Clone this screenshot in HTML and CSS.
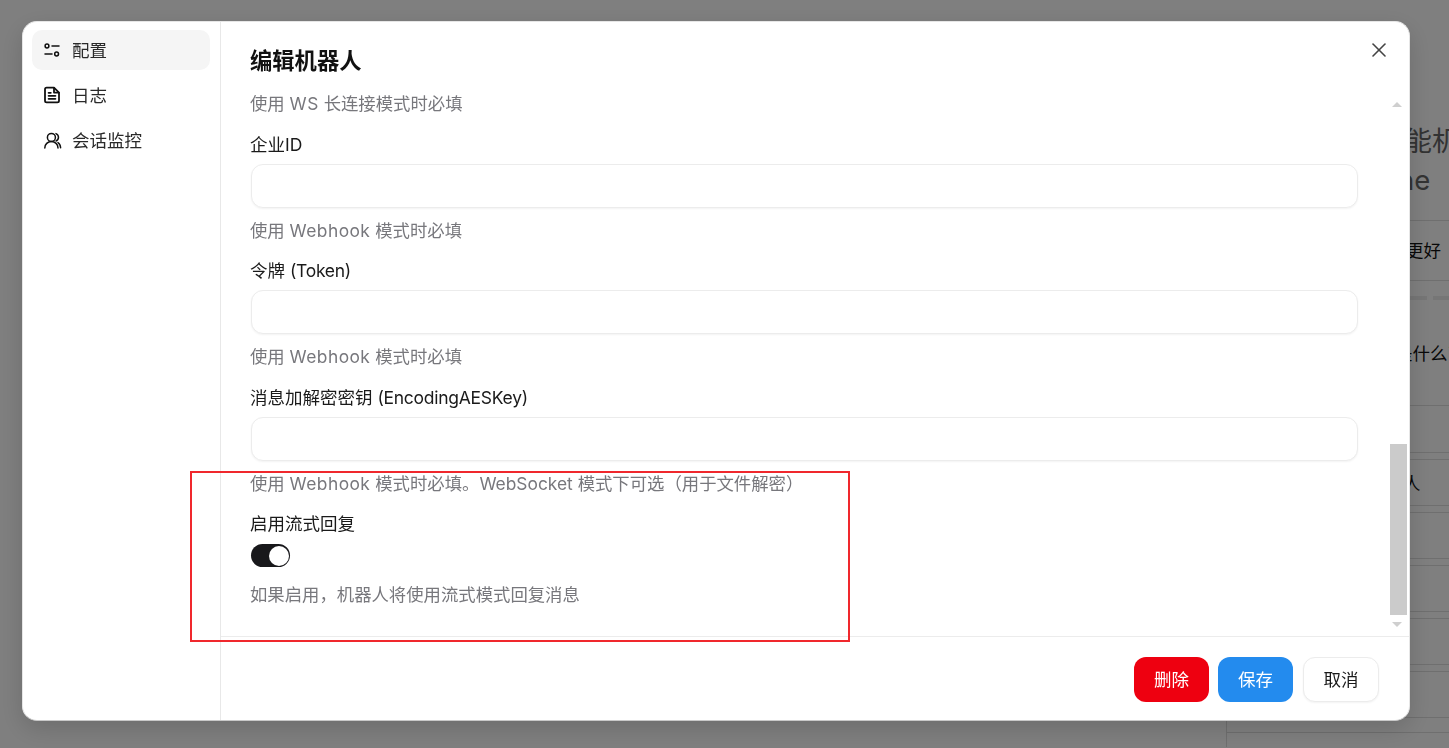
FILE: index.html
```html
<!DOCTYPE html>
<html lang="zh-CN">
<head>
<meta charset="utf-8">
<title>编辑机器人</title>
<link rel="stylesheet" href="styles.css">
</head>
<body>
<main class="page">
  <section class="page-col">
    <header class="page-head">
      <h1 class="page-title">智能机器人</h1>
      <p class="page-sub">ne</p>
    </header>
    <div class="row row-tall"><span class="row-text">更好</span></div>
    <div class="row row-chat">
      <div class="skeleton"><i class="skel skel-a"></i><i class="skel skel-b"></i></div>
      <span class="row-text row-text-b">是什么了</span>
    </div>
    <div class="row row-gap"></div>
    <div class="row row-thin"></div>
    <div class="row row-cell"><span class="row-text">人</span></div>
    <div class="row row-thin"></div>
    <div class="row row-cell"></div>
    <div class="row row-thin"></div>
    <div class="row row-cell"></div>
    <div class="row row-thin"></div>
    <div class="row row-cell"></div>
    <div class="row row-thin"></div>
    <div class="row row-cell"></div>
    <div class="row row-foot"></div>
    <div class="row row-foot"></div>
  </section>
</main>

<div class="overlay">
  <div class="dialog">
    <nav class="side">
      <a class="side-item is-active">
        <svg class="side-icon icon-thin" viewBox="0 0 20 20"><circle cx="5" cy="6" r="1.9"/><path d="M10 6h7"/><path d="M3 14h7"/><circle cx="14.6" cy="14" r="1.9"/></svg>
        <span>配置</span>
      </a>
      <a class="side-item">
        <svg class="side-icon" viewBox="0 0 20 20"><path d="M12 2.6H4.6A1.6 1.6 0 0 0 3 4.2v11.6a1.6 1.6 0 0 0 1.6 1.6h10.8a1.6 1.6 0 0 0 1.6-1.6V7.6Z"/><path d="M12 2.8v4.8h4.8"/><path d="M6.6 7.8h2.2"/><path d="M6.6 10.8h6.8"/><path d="M6.6 13.8h6.8"/></svg>
        <span>日志</span>
      </a>
      <a class="side-item">
        <svg class="side-icon icon-thin" viewBox="0 0 20 20"><circle cx="9.4" cy="7.4" r="4"/><path d="M2.8 18c0-3.8 2.9-6.4 6.6-6.4s6.6 2.6 6.6 6.4"/><path d="M14 3.6a4 4 0 0 1 0 7.4"/><path d="M16 12.6c1.5.9 2.4 2.8 2.6 5.2"/></svg>
        <span>会话监控</span>
      </a>
    </nav>

    <div class="main">
      <button class="close" type="button" aria-label="关闭">
        <svg viewBox="0 0 24 24"><path d="M18 6 6 18"/><path d="m6 6 12 12"/></svg>
      </button>
      <h2 class="title">编辑机器人</h2>
      <div class="body">
        <p class="hint">使用 <span class="en">WS</span> 长连接模式时必填</p>
        <div class="field">
          <label class="label">企业ID</label>
          <input class="input" type="text">
          <p class="hint">使用 <span class="en">Webhook</span> 模式时必填</p>
        </div>
        <div class="field">
          <label class="label">令牌 <span class="en-tight">(Token)</span></label>
          <input class="input" type="text">
          <p class="hint">使用 <span class="en">Webhook</span> 模式时必填</p>
        </div>
        <div class="field">
          <label class="label">消息加解密密钥 <span class="en-tight">(EncodingAESKey)</span></label>
          <input class="input" type="text">
          <p class="hint">使用 <span class="en">Webhook</span> 模式时必填。WebSocket 模式下可选（用于文件解密）</p>
        </div>
        <div class="field">
          <label class="label">启用流式回复</label>
          <div class="toggle"><span class="knob"></span></div>
          <p class="hint">如果启用，机器人将使用流式模式回复消息</p>
        </div>
        <div class="scroll-up"></div>
        <div class="scroll-thumb"></div>
        <div class="scroll-down"></div>
      </div>
      <footer class="footer">
        <button class="btn btn-danger" type="button">删除</button>
        <button class="btn btn-primary" type="button">保存</button>
        <button class="btn btn-plain" type="button">取消</button>
      </footer>
    </div>
  </div>
</div>

<div class="annotation"></div>
</body>
</html>
```

FILE: styles.css
```css
* { box-sizing: border-box; }

html, body {
  margin: 0;
  height: 100%;
  overflow: hidden;
}

body {
  background: #fff;
  color: #1a1a1a;
  font-family: Inter, "Noto Sans CJK SC", sans-serif;
  font-size: 17.5px;
  line-height: 25px;
}

h1, h2, p { margin: 0; font-weight: normal; }

/* page behind the dialog */
.page {
  display: flex;
  justify-content: flex-end;
  height: 748px;
}

.page-col {
  width: 223px;
  height: 748px;
  overflow: hidden;
  color: #111;
  white-space: nowrap;
}

.page-head {
  height: 220px;
  padding: 122px 0 0 151px;
}

.page-title,
.page-sub {
  font-size: 27.5px;
  line-height: 39px;
  color: #666;
}

.page-sub { padding-left: 21px; }

.row { border-top: 1px solid #dedede; }
.row-tall { height: 60px; padding: 17px 0 0 180px; }
.row-chat { height: 125px; padding: 15px 0 0 169px; }
.row-gap { height: 47px; }
.row-thin { height: 7px; }
.row-cell { height: 46px; padding: 11px 0 0 177px; }
.row-foot { height: 15px; border-left: 1px solid #dedede; }

.row-text { display: block; line-height: 25px; }
.row-text-b { margin-top: 41px; }

.skeleton { display: flex; gap: 6px; height: 4px; margin-left: 14px; }
.skel { display: block; background: #ececec; }
.skel-a { width: 22px; }
.skel-b { width: 20px; }

/* dialog */
.overlay {
  position: fixed;
  inset: 0;
  display: flex;
  padding: 21px 39px 27px 22px;
  background: rgba(0, 0, 0, 0.5);
}

.dialog {
  flex: 1;
  display: flex;
  overflow: hidden;
  background: #fff;
  border: 1px solid #e6e6e6;
  border-bottom-color: #c9c9c9;
  border-radius: 15px;
  box-shadow: 0 8px 24px rgba(0, 0, 0, 0.15);
}

.side {
  width: 198px;
  flex: none;
  display: flex;
  flex-direction: column;
  gap: 5px;
  padding: 8px 10px 0 9px;
  border-right: 1px solid #e8e8e8;
}

.side-item {
  display: flex;
  align-items: center;
  gap: 10px;
  height: 40px;
  padding-left: 10px;
  border-radius: 10px;
  color: #2a2a2a;
}

.is-active { background: #f5f5f5; }

.side-icon {
  width: 20px;
  height: 20px;
  flex: none;
  fill: none;
  stroke: #111;
  stroke-width: 1.8;
  stroke-linecap: round;
  stroke-linejoin: round;
}

.icon-thin { stroke-width: 1.5; }

.main {
  position: relative;
  flex: 1;
  min-width: 0;
  display: flex;
  flex-direction: column;
}

.close {
  position: absolute;
  top: 16px;
  right: 18px;
  width: 24px;
  height: 24px;
  padding: 0;
  border: 0;
  background: none;
}

.close svg {
  display: block;
  width: 24px;
  height: 24px;
  fill: none;
  stroke: #444;
  stroke-width: 1.6;
  stroke-linecap: round;
}

.title {
  height: 69px;
  padding: 24px 0 0 29px;
  font-size: 22.3px;
  line-height: 30px;
  font-weight: 600;
  color: #111;
}

.body {
  position: relative;
  flex: 1;
  min-height: 0;
  overflow: hidden;
  padding-left: 29px;
  padding-right: 51px;
}

.hint {
  font-size: 17.36px;
  line-height: 25px;
  color: #77777c;
  white-space: nowrap;
}

.en { letter-spacing: 0.45px; }
.en-tight { letter-spacing: -0.27px; }

.field { margin-top: 15.5px; }

.label {
  display: block;
  line-height: 25px;
  color: #1a1a1a;
}

.input {
  display: block;
  width: 1107px;
  height: 44px;
  margin: 7px 0 10px 1px;
  border: 1px solid #ececec;
  border-radius: 12px;
  background: #fff;
  box-shadow: 0 1px 2px rgba(0, 0, 0, 0.05);
  outline: none;
}

.toggle {
  display: flex;
  align-items: center;
  justify-content: flex-end;
  width: 39px;
  height: 23px;
  margin: 8px 0 15px 1px;
  padding-right: 1px;
  border-radius: 12px;
  background: #18181b;
}

.knob {
  width: 20px;
  height: 20px;
  border-radius: 50%;
  background: #fff;
}

.scroll-thumb {
  position: absolute;
  top: 353px;
  right: 2px;
  width: 17px;
  height: 171px;
  background: #cbcbcb;
}

.scroll-up,
.scroll-down {
  position: absolute;
  right: 7px;
  width: 0;
  height: 0;
  border-left: 5px solid transparent;
  border-right: 5px solid transparent;
}

.scroll-up { top: 11px; border-bottom: 5px solid #cfcfcf; }
.scroll-down { top: 531px; border-top: 5px solid #cfcfcf; }

.footer {
  display: flex;
  justify-content: flex-end;
  align-items: flex-start;
  gap: 9px;
  height: 84px;
  padding: 20px 30px 0 0;
  border-top: 1px solid #ececec;
}

.btn {
  width: 75px;
  height: 45px;
  padding: 0;
  border: 1px solid transparent;
  border-radius: 12px;
  font: inherit;
  line-height: 25px;
}

.btn-danger { background: #ee0010; color: #fff; }
.btn-primary { background: #238bee; color: #fff; }
.btn-plain {
  width: 76px;
  margin-left: 1px;
  background: #fff;
  color: #1a1a1a;
  border-color: #ececec;
  box-shadow: 0 1px 2px rgba(0, 0, 0, 0.05);
}

/* red review rectangle over the screenshot */
.annotation {
  position: fixed;
  left: 190px;
  top: 471px;
  width: 660px;
  height: 171px;
  border: 2px solid #f0282d;
}
```
